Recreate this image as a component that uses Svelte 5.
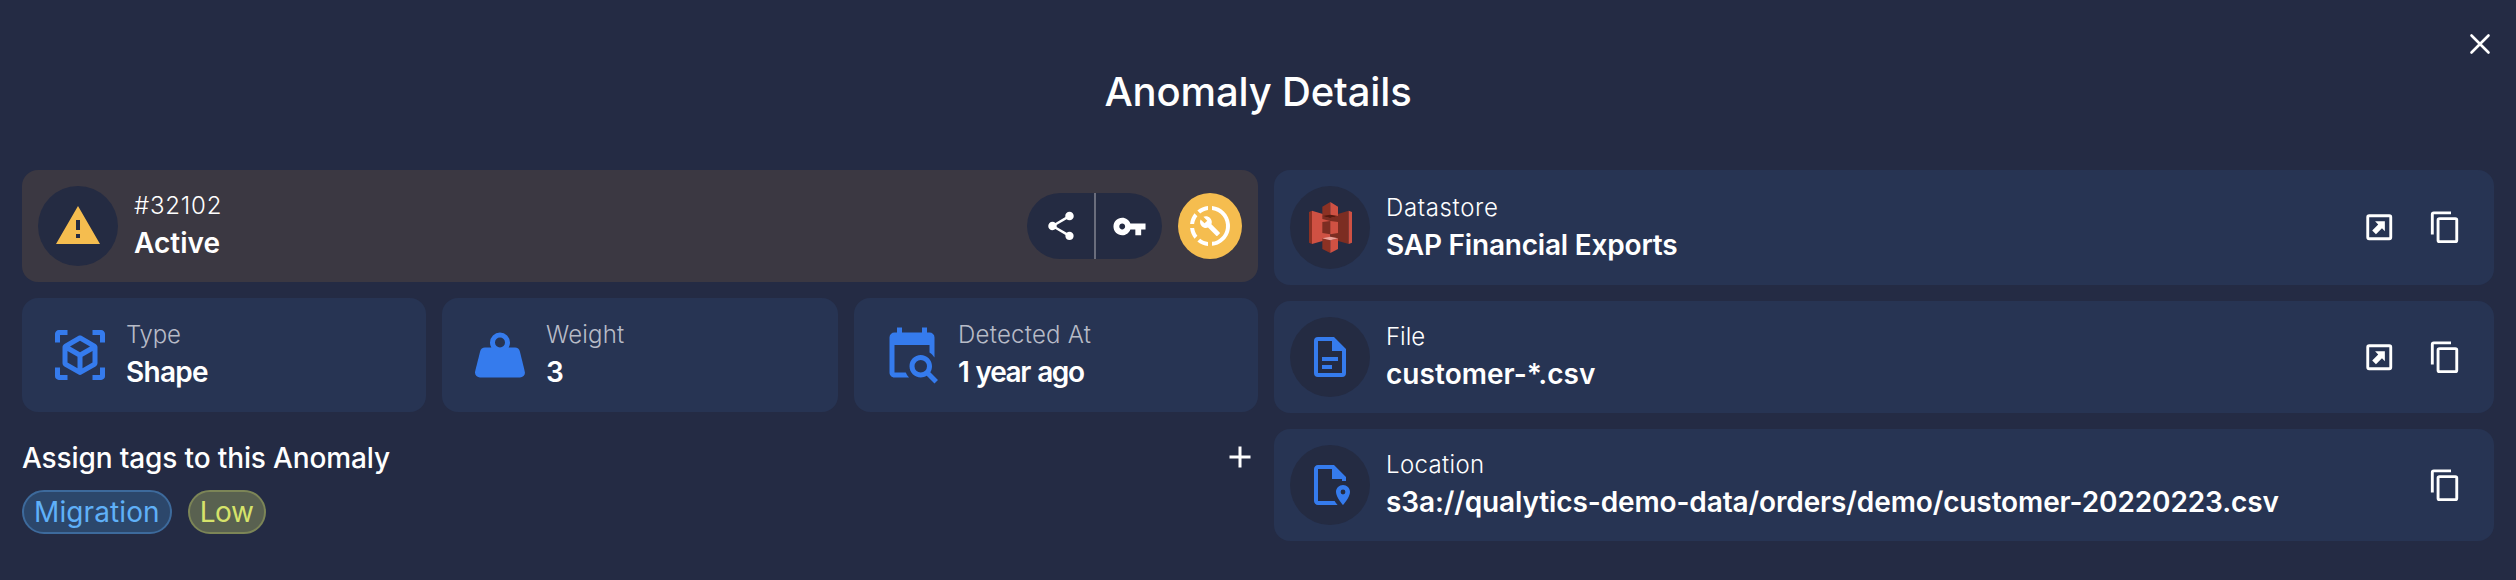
<script>
  const icons = {
    alert: 'M13 14H11V9H13M13 18H11V16H13M1 21H23L12 2L1 21Z',
    share: 'M18 16.08C17.24 16.08 16.56 16.38 16.04 16.85L8.91 12.7C8.96 12.47 9 12.24 9 12S8.96 11.53 8.91 11.3L15.96 7.19C16.5 7.69 17.21 8 18 8A3 3 0 0 0 21 5A3 3 0 0 0 18 2A3 3 0 0 0 15 5C15 5.24 15.04 5.47 15.09 5.7L8.04 9.81C7.5 9.31 6.79 9 6 9A3 3 0 0 0 3 12A3 3 0 0 0 6 15C6.79 15 7.5 14.69 8.04 14.19L15.16 18.34C15.11 18.55 15.08 18.77 15.08 19C15.08 20.61 16.39 21.91 18 21.91S20.92 20.61 20.92 19A2.92 2.92 0 0 0 18 16.08Z',
    key: 'M7 14C5.9 14 5 13.1 5 12S5.9 10 7 10 9 10.9 9 12 8.1 14 7 14M12.6 10C11.8 7.7 9.6 6 7 6C3.7 6 1 8.7 1 12S3.7 18 7 18C9.6 18 11.8 16.3 12.6 14H16V18H20V14H23V10H12.6Z',
    wrench: 'M13 2.03V2.05L13 4.05C17.39 4.59 20.5 8.58 19.96 12.97C19.5 16.61 16.64 19.5 13 19.93V21.93C18.5 21.38 22.5 16.5 21.95 11C21.5 6.25 17.73 2.5 13 2.03M11 2.06C9.05 2.25 7.19 3 5.67 4.26L7.1 5.74C8.22 4.84 9.57 4.26 11 4.06V2.06M4.26 5.67C3 7.19 2.25 9.04 2.05 11H4.05C4.24 9.58 4.8 8.23 5.69 7.1L4.26 5.67M2.06 13C2.26 14.96 3.03 16.81 4.27 18.33L5.69 16.9C4.81 15.77 4.24 14.42 4.06 13H2.06M7.1 18.37L5.67 19.74C7.18 21 9.04 21.79 11 22V20C9.58 19.82 8.23 19.25 7.1 18.37M16.82 15.19L12.71 11.08C13.12 10.04 12.89 8.82 12.03 7.97C11.13 7.06 9.78 6.88 8.69 7.38L10.63 9.32L9.28 10.68L7.29 8.73C6.75 9.82 7 11.17 7.88 12.08C8.74 12.94 9.96 13.16 11 12.76L15.11 16.86C15.29 17.05 15.56 17.05 15.74 16.86L16.78 15.83C17 15.65 17 15.33 16.82 15.19Z',
    cube: 'M17,22V20H20V17H22V20.5C22,20.89 21.84,21.24 21.54,21.54C21.24,21.84 20.89,22 20.5,22H17M7,22H3.5C3.11,22 2.76,21.84 2.46,21.54C2.16,21.24 2,20.89 2,20.5V17H4V20H7V22M17,2H20.5C20.89,2 21.24,2.16 21.54,2.46C21.84,2.76 22,3.11 22,3.5V7H20V4H17V2M7,2V4H4V7H2V3.5C2,3.11 2.16,2.76 2.46,2.46C2.76,2.16 3.11,2 3.5,2H7M13,17.25L17,14.95V10.36L13,12.66V17.25M12,10.92L16,8.63L12,6.28L8,8.63L12,10.92M7,14.95L11,17.25V12.66L7,10.36V14.95M18.23,7.59C18.73,7.91 19,8.34 19,8.91V15.23C19,15.8 18.73,16.23 18.23,16.55L12.75,19.73C12.25,20.05 11.75,20.05 11.25,19.73L5.77,16.55C5.27,16.23 5,15.8 5,15.23V8.91C5,8.34 5.27,7.91 5.77,7.59L11.25,4.41C11.5,4.28 11.75,4.22 12,4.22C12.25,4.22 12.5,4.28 12.75,4.41L18.23,7.59Z',
    weight: 'M12,3A4,4 0 0,1 16,7C16,7.73 15.81,8.41 15.46,9H18C18.95,9 19.75,9.67 19.95,10.56C21.96,18.57 22,18.78 22,19A2,2 0 0,1 20,21H4A2,2 0 0,1 2,19C2,18.78 2.04,18.57 4.05,10.56C4.25,9.67 5.05,9 6,9H8.54C8.19,8.41 8,7.73 8,7A4,4 0 0,1 12,3M12,5A2,2 0 0,0 10,7A2,2 0 0,0 12,9A2,2 0 0,0 14,7A2,2 0 0,0 12,5Z',
    calendar: 'M15.5,12C18,12 20,14 20,16.5C20,17.38 19.75,18.21 19.31,18.9L22.39,22L21,23.39L17.88,20.32C17.19,20.75 16.37,21 15.5,21C13,21 11,19 11,16.5C11,14 13,12 15.5,12M15.5,14A2.5,2.5 0 0,0 13,16.5A2.5,2.5 0 0,0 15.5,19A2.5,2.5 0 0,0 18,16.5A2.5,2.5 0 0,0 15.5,14M5,3H6V1H8V3H16V1H18V3H19A2,2 0 0,1 21,5V13.03C20.5,12.23 19.81,11.54 19,11V8H5V19H9.5C9.81,19.75 10.26,20.42 10.81,21H5C3.89,21 3,20.1 3,19V5A2,2 0 0,1 5,3Z',
    file: 'M6,2A2,2 0 0,0 4,4V20A2,2 0 0,0 6,22H18A2,2 0 0,0 20,20V8L14,2H6M6,4H13V9H18V20H6V4M8,12V14H16V12H8M8,16V18H13V16H8Z',
    marker: 'M6 2C4.89 2 4 2.9 4 4V20C4 21.1 4.9 22 6 22H15.8C15.2 21.3 14.7 20.7 14.3 20H6V4H13V9H18V10H20V8L14 2M18.5 12C16.6 12 15 13.6 15 15.5C15 18.1 18.5 22 18.5 22S22 18.1 22 15.5C22 13.6 20.4 12 18.5 12M18.5 16.7A1.2 1.2 0 1 1 18.5 14.3A1.2 1.2 0 0 1 18.5 16.7Z',
    open: 'M5 3A2 2 0 0 0 3 5V19A2 2 0 0 0 5 21H19A2 2 0 0 0 21 19V5A2 2 0 0 0 19 3H5M5 5H19V19H5V5M15.9 7.9V14.7L13.9 12.7L9.7 16.9L7.1 14.3L11.3 10.1L9.1 7.9Z',
    copy: 'M19,21H8V7H19M19,5H8A2,2 0 0,0 6,7V21A2,2 0 0,0 8,23H19A2,2 0 0,0 21,21V7A2,2 0 0,0 19,5M16,1H4A2,2 0 0,0 2,3V17H4V3H16V1Z',
    plus: 'M19,13H13V19H11V13H5V11H11V5H13V11H19V13Z'
  };

  const stats = [
    { icon: 'cube', label: 'Type', value: 'Shape', ls: -0.2, vs: -0.7 },
    { icon: 'weight', label: 'Weight', value: '3', ls: 0.2, vs: 0 },
    { icon: 'calendar', label: 'Detected At', value: '1 year ago', ls: 0.25, vs: -1.4 }
  ];

  const sources = [
    { icon: 's3', label: 'Datastore', value: 'SAP Financial Exports', ls: 0.65, vs: -0.2, open: true },
    { icon: 'file', label: 'File', value: 'customer-*.csv', ls: 0, vs: 0.05, open: true },
    { icon: 'marker', label: 'Location', value: 's3a://qualytics-demo-data/orders/demo/customer-20220223.csv', ls: 0.35, vs: -0.12, open: false }
  ];
</script>

{#snippet icon(name, size)}
  <svg class="icon" width={size} height={size} viewBox="0 0 24 24" fill="currentColor" fill-rule="evenodd" aria-hidden="true">
    <path d={icons[name]} />
  </svg>
{/snippet}

{#snippet bucket()}
  <svg class="icon" width="43" height="51" viewBox="147 126 129 153" aria-hidden="true">
    <path fill="#8c3123" d="M147 156L156 152V252L147 248Z" />
    <path fill="#cf5143" d="M156 152L211 169V236L156 252Z" />
    <path fill="#7c2d22" d="M211 169L266 152V252L211 236Z" />
    <path fill="#cf5143" d="M266 152L276 156V248L266 252Z" />
    <path fill="#7c2d22" d="M187 168L211 174L234 168V180L211 183L187 177Z" />
    <path fill="#8c3123" d="M187 140L211 126V174L187 168Z" />
    <path fill="#cf5143" d="M211 126L234 140V168L211 174Z" />
    <path fill="#54190f" d="M187 168L211 164L234 168L211 174Z" />
    <path fill="#7c2d22" d="M187 186L211 183V223L187 219Z" />
    <path fill="#cf5143" d="M211 183L234 186V219L211 223Z" />
    <path fill="#8c3123" d="M187 235L211 241V279L187 267Z" />
    <path fill="#cf5143" d="M211 241L234 235V267L211 279Z" />
    <path fill="#eba199" d="M187 235L211 230L234 235L211 241Z" />
  </svg>
{/snippet}

<main>
  <button class="close" aria-label="Close">
    <svg class="icon" width="24" height="24" viewBox="0 0 24 24" fill="none" stroke="currentColor" stroke-width="2.6" stroke-linecap="round"><path d="M3.5 3.5L20.5 20.5M20.5 3.5L3.5 20.5" /></svg>
  </button>
  <h1>Anomaly Details</h1>

  <div class="columns">
    <section class="left">
      <div class="card status">
        <span class="disc warn">{@render icon('alert', 48)}</span>
        <div class="text">
          <span class="label bright id">#32102</span>
          <span class="value state">Active</span>
        </div>
        <div class="group">
          <button aria-label="Share">{@render icon('share', 34)}</button>
          <button aria-label="Key">{@render icon('key', 35)}</button>
        </div>
        <button class="resolve" aria-label="Resolve">{@render icon('wrench', 48)}</button>
      </div>

      <div class="stats">
        {#each stats as s}
          <div class="card stat">
            <span class="blue">{@render icon(s.icon, 60)}</span>
            <div class="text">
              <span class="label" style:letter-spacing="{s.ls}px">{s.label}</span>
              <span class="value" style:letter-spacing="{s.vs}px">{s.value}</span>
            </div>
          </div>
        {/each}
      </div>

      <div class="assign">
        <h2>Assign tags to this Anomaly</h2>
        <button aria-label="Add tag">{@render icon('plus', 36)}</button>
      </div>
      <div class="tags">
        <span class="tag migration">Migration</span>
        <span class="tag low">Low</span>
      </div>
    </section>

    <section class="right">
      {#each sources as s}
        <div class="card source" class:tall={s.icon === 's3'}>
          <span class="disc blue">
            {#if s.icon === 's3'}{@render bucket()}{:else}{@render icon(s.icon, 48)}{/if}
          </span>
          <div class="text">
            <span class="label bright" style:letter-spacing="{s.ls}px">{s.label}</span>
            <span class="value" style:letter-spacing="{s.vs}px">{s.value}</span>
          </div>
          <div class="actions">
            {#if s.open}<button aria-label="Open">{@render icon('open', 34.5)}</button>{/if}
            <button aria-label="Copy">{@render icon('copy', 34.5)}</button>
          </div>
        </div>
      {/each}
    </section>
  </div>
</main>

<style>
  :global(body) { background: #242b44; }
  main {
    position: relative;
    box-sizing: border-box;
    width: 2516px;
    height: 580px;
    padding: 68px 22px 0;
    overflow: hidden;
    background: #242b44;
    color: #fff;
    font-family: Inter, sans-serif;
  }
  h1, h2 { margin: 0; font-weight: 500; white-space: nowrap; }
  h1 { font-size: 40px; line-height: 48px; letter-spacing: -0.15px; text-align: center; }
  button {
    display: flex;
    align-items: center;
    justify-content: center;
    padding: 0;
    border: 0;
    background: none;
    color: inherit;
  }
  .icon { display: block; flex: none; }
  .close { position: absolute; top: 32px; right: 24px; }
  .columns { display: grid; grid-template-columns: 1236px 1220px; gap: 16px; margin-top: 54px; }
  .card {
    display: flex;
    align-items: center;
    gap: 16px;
    box-sizing: border-box;
    border-radius: 16px;
    background: #273453;
  }
  .status { height: 112px; padding: 0 16px; background: #3b3842; }
  .disc {
    display: flex;
    align-items: center;
    justify-content: center;
    width: 80px;
    height: 80px;
    border-radius: 50%;
    background: #242b42;
  }
  .tall .disc { height: 83px; }
  .warn { color: #f5bd4f; }
  .blue { color: #357bed; }
  .text { display: flex; flex: 1; flex-direction: column; margin-top: -1px; white-space: nowrap; }
  .label { color: #b7bbc7; font-size: 24px; font-weight: 300; line-height: 35px; }
  .bright { color: #fff; }
  .value { font-size: 28px; font-weight: 600; line-height: 40px; }
  .stat .value { word-spacing: 1.5px; }
  .id { letter-spacing: 0.8px; }
  .state { letter-spacing: 0; }
  .group { display: flex; height: 66px; overflow: hidden; border-radius: 33px; background: #242b42; }
  .group button { width: 67px; }
  .group button + button { width: 68px; border-left: 2px solid #6a6d7c; }
  .resolve { width: 64px; height: 66px; border-radius: 50%; background: #f5bd4f; }
  .stats { display: grid; grid-template-columns: 404px 396px 404px; gap: 16px; margin-top: 16px; }
  .stat { height: 114px; padding: 0 28px; }
  .assign { display: flex; align-items: center; justify-content: space-between; height: 36px; margin-top: 27px; }
  h2 { padding-top: 2px; font-size: 28px; line-height: 36px; letter-spacing: -0.13px; }
  .tags { display: flex; gap: 16px; margin-top: 15px; }
  .tag {
    box-sizing: border-box;
    height: 44px;
    padding: 1px 10px 0;
    border: 2px solid;
    border-radius: 22px;
    font-size: 28px;
    line-height: 39px;
  }
  .migration { border-color: #3d6a9c; background: #2c476b; color: #5fb0f8; letter-spacing: 0.1px; }
  .low { border-color: #7c8557; background: #596150; color: #d6e36a; letter-spacing: -0.4px; }
  .right { display: flex; flex-direction: column; gap: 16px; }
  .source { height: 112px; padding: 0 32px 0 16px; }
  .tall { height: 115px; }
  .actions { display: flex; gap: 31px; }
</style>
